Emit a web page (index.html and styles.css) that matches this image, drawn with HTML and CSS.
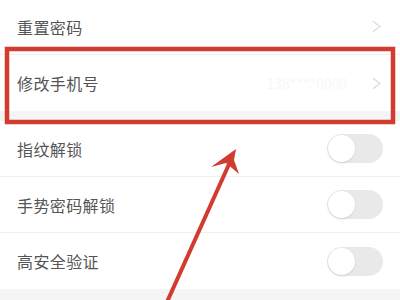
FILE: index.html
```html
<!DOCTYPE html>
<html lang="zh-CN">
<head>
  <meta charset="UTF-8" />
  <meta name="viewport" content="width=device-width, initial-scale=1" />
  <title>账号与安全</title>
  <link rel="stylesheet" href="styles.css">
</head>
<body>
  <div class="screen">
    <!-- Password / phone -->
    <div class="group">
      <div class="row">
        <span class="label">重置密码</span>
        <span class="chevron"></span>
      </div>
      <div class="row">
        <span class="label">修改手机号</span>
        <span class="masked">138****0000</span>
        <span class="chevron"></span>
      </div>
    </div>

    <div class="gap"></div>

    <!-- Unlock options -->
    <div class="group">
      <div class="row">
        <span class="label">指纹解锁</span>
        <span class="switch"><span class="knob"></span></span>
      </div>
      <div class="row">
        <span class="label">手势密码解锁</span>
        <span class="switch"><span class="knob"></span></span>
      </div>
      <div class="row">
        <span class="label">高安全验证</span>
        <span class="switch"><span class="knob"></span></span>
      </div>
    </div>

    <div class="gap"></div>

    <!-- Annotation layer -->
    <svg class="marks" width="400" height="300" viewBox="0 0 400 300">
      <rect x="7" y="49" width="386" height="73" fill="none" stroke="#d23b2f" stroke-width="4.5" />
      <line x1="167" y1="302" x2="230" y2="162" stroke="#d23b2f" stroke-width="4" />
      <polygon points="236,149 211,167 226,163 239,174 234,160" fill="#d23b2f" />
    </svg>
  </div>
</body>
</html>
```

FILE: styles.css
```css
* {
  box-sizing: border-box;
  margin: 0;
  padding: 0;
}

body, html {
  width: 400px;
  height: 300px;
  overflow: hidden;
  background: #f5f5f5;
  font-family: "Noto Sans CJK SC", "Noto Sans", sans-serif;
  color: #555;
}

.screen {
  position: relative;
  height: 300px;
  display: flex;
  flex-direction: column;
  margin-top: -1px;
}

.group {
  background: #fff;
}

.row {
  height: 56px;
  display: flex;
  align-items: center;
  padding: 0 17px;
  border-bottom: 1px solid #f0f0f0;
}

.group .row:last-child {
  border-bottom: none;
}

.label {
  flex: 1;
  font-size: 16px;
  letter-spacing: 0.4px;
}

.masked {
  font-size: 14px;
  color: #f7f7f7;
  margin-right: 22px;
}

.chevron {
  width: 9px;
  height: 9px;
  border-top: 1.3px solid #d2d2d2;
  border-right: 1.3px solid #d2d2d2;
  transform: rotate(45deg) skew(-8deg, -8deg);
  margin-right: 5px;
}

.switch {
  width: 56px;
  height: 29px;
  border-radius: 15px;
  background: #e9e9e9;
  display: flex;
  align-items: center;
  padding: 1px;
}

.knob {
  width: 27px;
  height: 27px;
  border-radius: 50%;
  background: #fff;
  box-shadow: 0 1px 2px rgba(0, 0, 0, 0.12);
}

.gap {
  height: 10px;
}

.marks {
  position: absolute;
  left: 0;
  top: 1px;
  pointer-events: none;
}
```
